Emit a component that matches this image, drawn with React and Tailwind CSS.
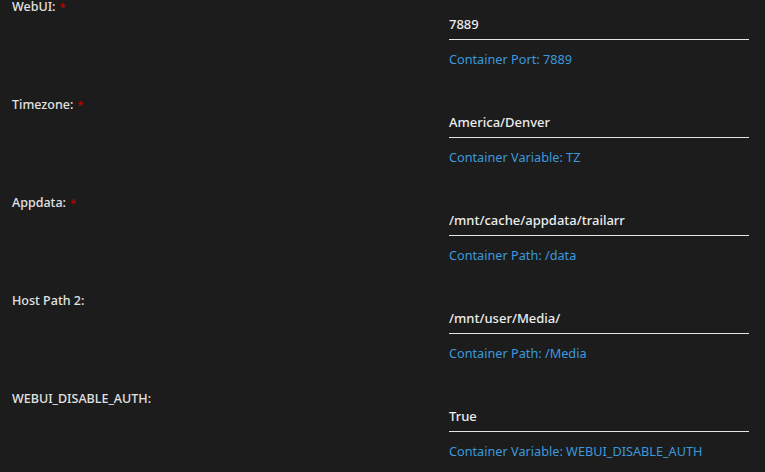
import React from 'react';

const rows = [
  { label: 'WebUI:', required: true, value: '7889', desc: 'Container Port: 7889' },
  { label: 'Timezone:', required: true, value: 'America/Denver', desc: 'Container Variable: TZ' },
  { label: 'Appdata:', required: true, value: '/mnt/cache/appdata/trailarr', desc: 'Container Path: /data' },
  { label: 'Host Path 2:', required: false, value: '/mnt/user/Media/', desc: 'Container Path: /Media' },
  { label: 'WEBUI_DISABLE_AUTH:', required: false, value: 'True', desc: 'Container Variable: WEBUI_DISABLE_AUTH' },
];

const ConfigRow = ({ label, required, value, desc }) => (
  <div className="grid grid-cols-[437px_300px] h-[98px]">
    <div className="-mt-px text-[12.5px] leading-4 font-medium text-[#e2e2e2]">
      {label}
      {required && <span className="text-[#c40000] text-[11px] align-top ml-1">*</span>}
    </div>
    <div>
      <div className="pt-4 pb-[7px] border-b border-[#e4e4e4] text-[13px] leading-4 font-medium text-[#ececec]">
        {value}
      </div>
      <div className="mt-[11px] text-[12.7px] leading-4 text-[#3b99dc]">{desc}</div>
    </div>
  </div>
);

export default function App() {
  return (
    <div
      className="w-[765px] h-[472px] overflow-hidden bg-[#1c1c1c] pl-3"
      style={{ fontFamily: '"Noto Sans", "Open Sans", sans-serif' }}
    >
      {rows.map((r) => (
        <ConfigRow key={r.label} {...r} />
      ))}
    </div>
  );
}
